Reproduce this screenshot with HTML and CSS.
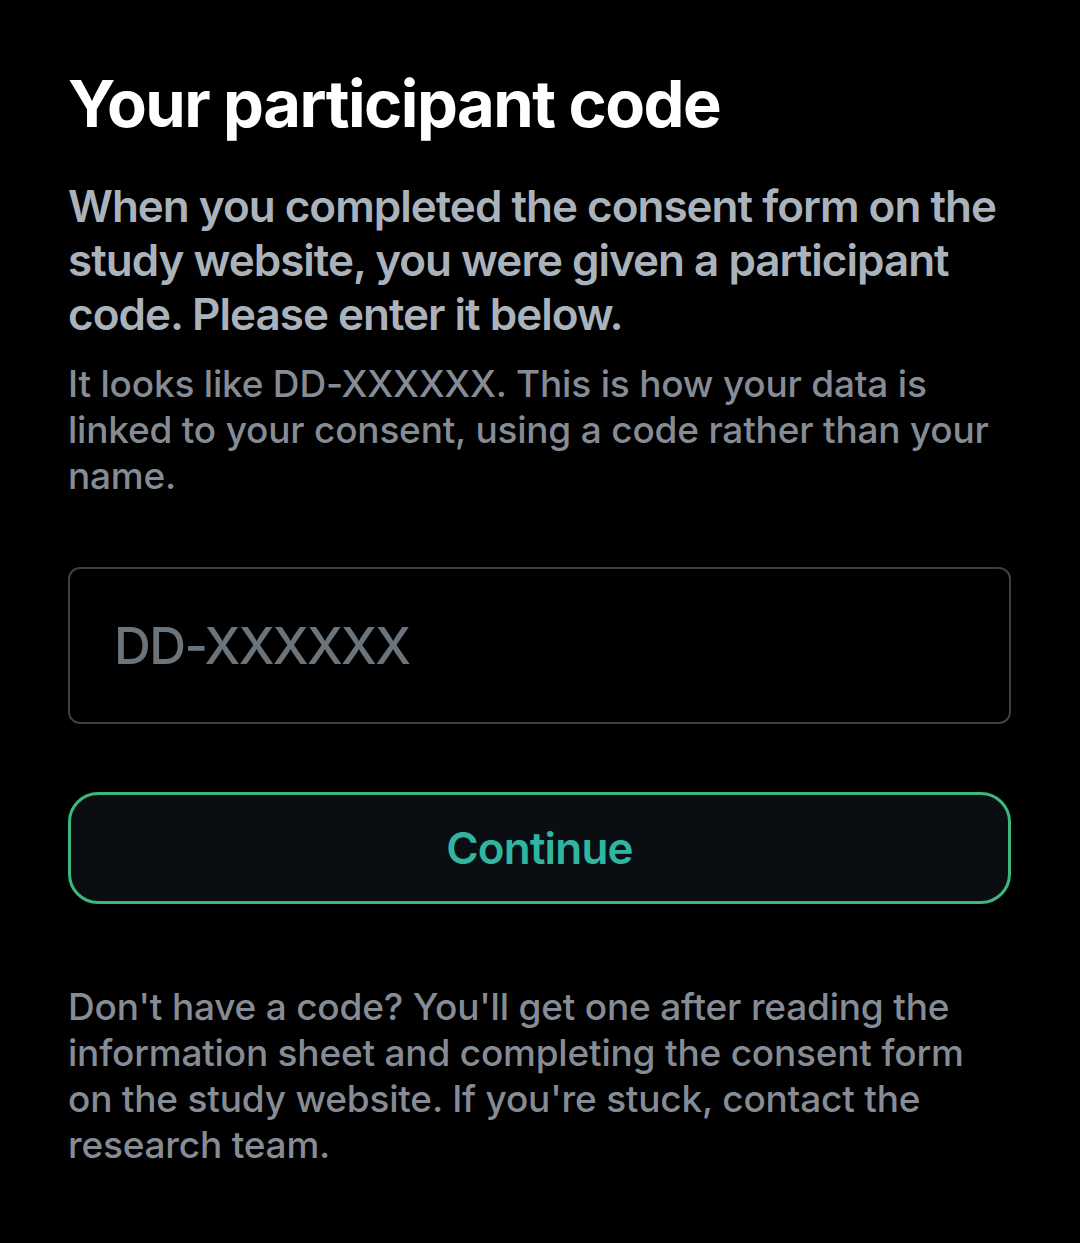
FILE: index.html
```html
<!DOCTYPE html>
<html lang="en">
<head>
    <meta charset="UTF-8">
    <meta name="viewport" content="width=device-width, initial-scale=1.0">
    <title>Your participant code</title>
    <link rel="stylesheet" href="styles.css">
</head>
<body>

<div class="screen">
    <h1 class="title">Your participant code</h1>
    <p class="lead">When you completed the consent form on the study website, you were given a participant code. Please enter it below.</p>
    <p class="hint">It looks like DD-XXXXXX. This is how your data is linked to your consent, using a code rather than your name.</p>

    <input type="text" class="code-input" placeholder="DD-XXXXXX">

    <button class="continue">Continue</button>

    <p class="hint footer">Don't have a code? You'll get one after reading the information sheet and completing the consent form on the study website. If you're stuck, contact the research team.</p>
</div>

</body>
</html>
```

FILE: styles.css
```css
body {
    margin: 0;
    background-color: #000;
    font-family: Inter, "Noto Sans", sans-serif;
}
.screen {
    padding: 64px 69px 0 68px;
    display: flex;
    flex-direction: column;
}
.title {
    margin: 0;
    font-size: 65px;
    font-weight: 700;
    line-height: 80px;
    letter-spacing: -1.5px;
    color: #fff;
}
.lead {
    margin: 35px 0 0;
    font-size: 44px;
    font-weight: 600;
    line-height: 54px;
    letter-spacing: -1px;
    color: #aab3bc;
}
.hint {
    margin: 20px 0 0;
    font-size: 37px;
    font-weight: 500;
    line-height: 46px;
    letter-spacing: -0.2px;
    color: #868c95;
}
.code-input {
    margin-top: 68px;
    height: 157px;
    box-sizing: border-box;
    padding: 0 44px;
    border: 2px solid #3b4043;
    border-radius: 12px;
    background-color: #000;
    font-family: inherit;
    font-size: 51px;
    font-weight: 500;
    letter-spacing: -1.6px;
    color: #fff;
    outline: none;
}
.code-input::placeholder {
    color: #6b737b;
}
.continue {
    margin-top: 68px;
    height: 112px;
    border: 3px solid #3db87c;
    border-radius: 30px;
    background-color: #0a0e12;
    font-family: inherit;
    font-size: 44px;
    font-weight: 600;
    letter-spacing: -0.8px;
    color: #2fb5a0;
    cursor: pointer;
}
.footer {
    margin-top: 80px;
}
```
